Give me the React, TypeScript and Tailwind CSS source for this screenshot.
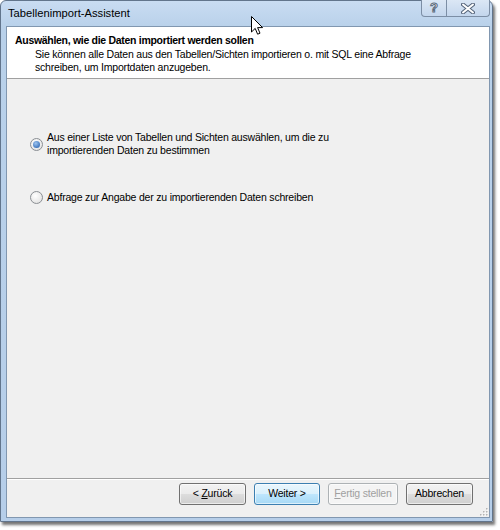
import React from "react";

const font = "font-['Liberation_Sans',Arial,sans-serif]";

function Radio({ checked }: { checked?: boolean }) {
  return (
    <span className="flex h-[13px] w-[13px] shrink-0 items-center justify-center rounded-full border border-[#8b8f94] bg-[radial-gradient(circle_at_40%_35%,#ffffff,#dcdcdc)]">
      {checked && (
        <span className="h-[7px] w-[7px] rounded-full bg-[radial-gradient(circle_at_40%_35%,#9cc4f0,#1c57a8)]" />
      )}
    </span>
  );
}

function WizardButton({
  label,
  width,
  variant = "normal",
}: {
  label: React.ReactNode;
  width: string;
  variant?: "normal" | "default" | "disabled";
}) {
  const styles = {
    normal:
      "border-[#707070] bg-[linear-gradient(#f2f2f2_0%,#ebebeb_50%,#dddddd_51%,#cfcfcf_100%)] text-black",
    default:
      "border-[#3c7fb1] bg-[linear-gradient(#eaf6fd_0%,#d9f0fc_50%,#bee6fd_51%,#a7d9f5_100%)] text-black",
    disabled: "border-[#adb2b5] bg-[#f4f4f4] text-[#a0a0a0]",
  }[variant];
  return (
    <button
      className={`flex h-[22px] items-center justify-center rounded-[3px] border text-[10.5px] shadow-[inset_0_0_0_1px_rgba(255,255,255,0.6)] ${styles} ${width}`}
    >
      {label}
    </button>
  );
}

export default function App() {
  return (
    <div className={`relative h-[530px] w-[500px] bg-white ${font}`}>
      <div className="flex h-[522px] w-[493px] flex-col rounded-t-[6px] border border-[#62758c] bg-[linear-gradient(#c9dcf2_0px,#b9d1ea_26px,#b6cee9_100%)] pb-[3px] pl-[5px] pr-[2px] shadow-[2px_3px_3px_rgba(0,0,0,0.55)]">
        {/* title bar */}
        <div className="flex h-[25px] shrink-0 items-center pl-[2px] text-[11.2px] text-black">
          Tabellenimport-Assistent
        </div>

        {/* client */}
        <div className="flex flex-1 flex-col border border-[#8197b0] bg-[#f0f0f0]">
          <div className="h-[52px] shrink-0 border-b border-[#a0a0a0] bg-white pl-[8px] pt-[7px] text-[10.5px] leading-[13px] text-black">
            <div className="font-bold tracking-[-0.3px]">
              Auswählen, wie die Daten importiert werden sollen
            </div>
            <div className="pl-[20px] pt-[1px] tracking-[-0.2px]">
              Sie können alle Daten aus den Tabellen/Sichten importieren o. mit
              SQL eine Abfrage
              <br />
              schreiben, um Importdaten anzugeben.
            </div>
          </div>
          <div className="flex flex-1 flex-col border-b border-[#a0a0a0] pl-[23px] pt-[52px] text-[10.5px] leading-[13px] tracking-[-0.2px] text-black">
            <div className="flex items-center gap-[4px]">
              <Radio checked />
              <div>
                Aus einer Liste von Tabellen und Sichten auswählen, um die zu
                <br />
                importierenden Daten zu bestimmen
              </div>
            </div>
            <div className="mt-[34px] flex items-center gap-[4px]">
              <Radio />
              <div>Abfrage zur Angabe der zu importierenden Daten schreiben</div>
            </div>
          </div>
          <div className="relative flex h-[38px] shrink-0 justify-end gap-[8px] border-t border-white pr-[16px] pt-[3px] tracking-[-0.2px]">
            <WizardButton
              width="w-[67px]"
              label={
                <span>
                  &lt; <span className="underline">Z</span>urück
                </span>
              }
            />
            <WizardButton width="w-[66px]" variant="default" label="Weiter >" />
            <WizardButton
              width="w-[70px]"
              variant="disabled"
              label={
                <span>
                  <span className="underline">F</span>ertig stellen
                </span>
              }
            />
            <WizardButton width="w-[67px]" label="Abbrechen" />
            <svg
              className="absolute bottom-[1px] right-[1px]"
              width="10"
              height="10"
              viewBox="0 0 10 10"
            >
              {[
                [8, 2],
                [5, 5],
                [8, 5],
                [2, 8],
                [5, 8],
                [8, 8],
              ].map(([x, y]) => (
                <g key={`${x}-${y}`}>
                  <rect x={x + 1} y={y + 1} width="1.5" height="1.5" fill="#ffffff" />
                  <rect x={x} y={y} width="1.5" height="1.5" fill="#b4b4b4" />
                </g>
              ))}
            </svg>
          </div>
        </div>
      </div>

      {/* caption buttons */}
      <div className="absolute right-[10px] top-0 flex">
        <div className="flex h-[17px] w-[26px] items-center justify-center rounded-bl-[4px] border border-t-0 border-[#7c8ea5] bg-[linear-gradient(#dbe7f5,#c3d6ed)] text-[13px] font-bold text-white [-webkit-text-stroke:1px_#5b6a7c]">
          ?
        </div>
        <div className="flex h-[17px] w-[43px] items-center justify-center rounded-br-[4px] border border-l-0 border-t-0 border-[#7c8ea5] bg-[linear-gradient(#dbe7f5,#c3d6ed)]">
          <svg width="14" height="11" viewBox="0 0 14 11">
            <path d="M2 1.5L12 9.5M12 1.5L2 9.5" stroke="#55647a" strokeWidth="4" strokeLinecap="round" />
            <path d="M2 1.5L12 9.5M12 1.5L2 9.5" stroke="#ffffff" strokeWidth="2" strokeLinecap="round" />
          </svg>
        </div>
      </div>

      {/* mouse cursor */}
      <svg
        className="absolute left-[251px] top-[16px]"
        width="13"
        height="20"
        viewBox="0 0 13 20"
      >
        <path
          d="M0.5 0.5V16L4.2 12.4L6.6 18.2L9 17.2L6.6 11.6H11.6Z"
          fill="#ffffff"
          stroke="#000000"
          strokeWidth="1"
          strokeLinejoin="round"
        />
      </svg>
    </div>
  );
}
